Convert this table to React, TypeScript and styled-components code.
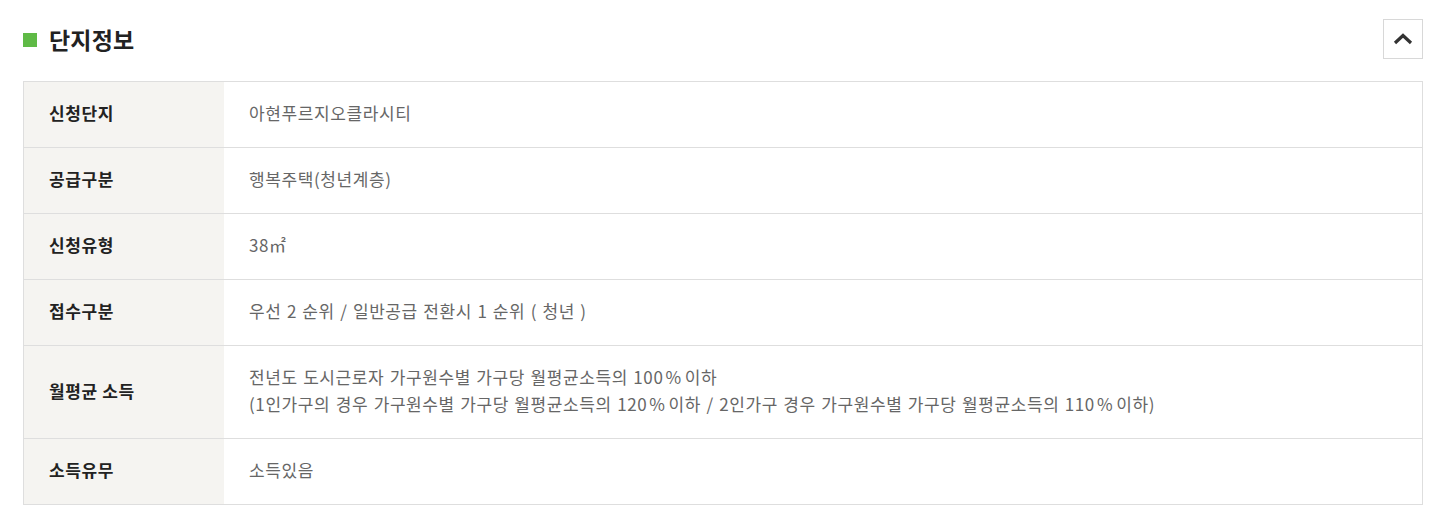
import React from 'react'
import styled, { createGlobalStyle } from 'styled-components'

const GlobalStyle = createGlobalStyle`
  body {
    margin: 0;
    background: #fff;
    font-family: 'Noto Sans CJK KR', 'Noto Sans', sans-serif;
  }
`

const Section = styled.section`
  padding: 19px 8px 0 23px;
  width: 1400px;
`

const Header = styled.div`
  display: flex;
  align-items: center;
  justify-content: space-between;
  height: 40px;
  margin-bottom: 22px;
`

const Title = styled.h2`
  display: flex;
  align-items: center;
  gap: 12px;
  margin: 0;
  font-size: 23px;
  font-weight: 700;
  color: #222;
  letter-spacing: 0.2px;

  &::before {
    content: '';
    width: 14px;
    height: 14px;
    margin-top: 1px;
    background: #5fba46;
  }
`

const ToggleButton = styled.button`
  width: 40px;
  height: 40px;
  display: flex;
  align-items: center;
  justify-content: center;
  padding: 0;
  background: #fff;
  border: 1px solid #d8d8d8;
  cursor: pointer;
`

const Table = styled.div`
  border: 1px solid #dedede;
  border-bottom: none;
`

const Row = styled.div`
  display: grid;
  grid-template-columns: 200px 1fr;
  border-bottom: 1px solid #dedede;
`

const Label = styled.div`
  display: flex;
  align-items: center;
  padding: 17px 25px 21px;
  background: #f5f4f1;
  font-size: 17px;
  line-height: 27px;
  letter-spacing: 0.6px;
  font-weight: 700;
  color: #222;
`

const Value = styled.div`
  padding: 17px 25px 21px;
  font-size: 17px;
  line-height: 27px;
  letter-spacing: 0.6px;
  word-spacing: 1px;
  color: #666;
`

const Pct = styled.span`
  margin: 0 3px 0 2px;
`

const rows: [string, React.ReactNode][] = [
  ['신청단지', '아현푸르지오클라시티'],
  ['공급구분', '행복주택(청년계층)'],
  ['신청유형', '38㎡'],
  ['접수구분', '우선 2 순위 / 일반공급 전환시 1 순위 ( 청년 )'],
  [
    '월평균 소득',
    <>
      전년도 도시근로자 가구원수별 가구당 월평균소득의 100<Pct>%</Pct>이하
      <br />
      (1인가구의 경우 가구원수별 가구당 월평균소득의 120<Pct>%</Pct>이하 / 2인가구 경우 가구원수별 가구당
      월평균소득의 110<Pct>%</Pct>이하)
    </>,
  ],
  ['소득유무', '소득있음'],
]

const App: React.FC = () => {
  return (
    <>
      <GlobalStyle />
      <Section>
        <Header>
          <Title>단지정보</Title>
          <ToggleButton aria-label="접기">
            <svg width="20" height="12" viewBox="0 0 20 12">
              <path d="M2 10 L10 2.5 L18 10" fill="none" stroke="#333" strokeWidth="3.2" />
            </svg>
          </ToggleButton>
        </Header>
        <Table>
          {rows.map(([label, value]) => (
            <Row key={label}>
              <Label>{label}</Label>
              <Value>{value}</Value>
            </Row>
          ))}
        </Table>
      </Section>
    </>
  )
}

export default App
